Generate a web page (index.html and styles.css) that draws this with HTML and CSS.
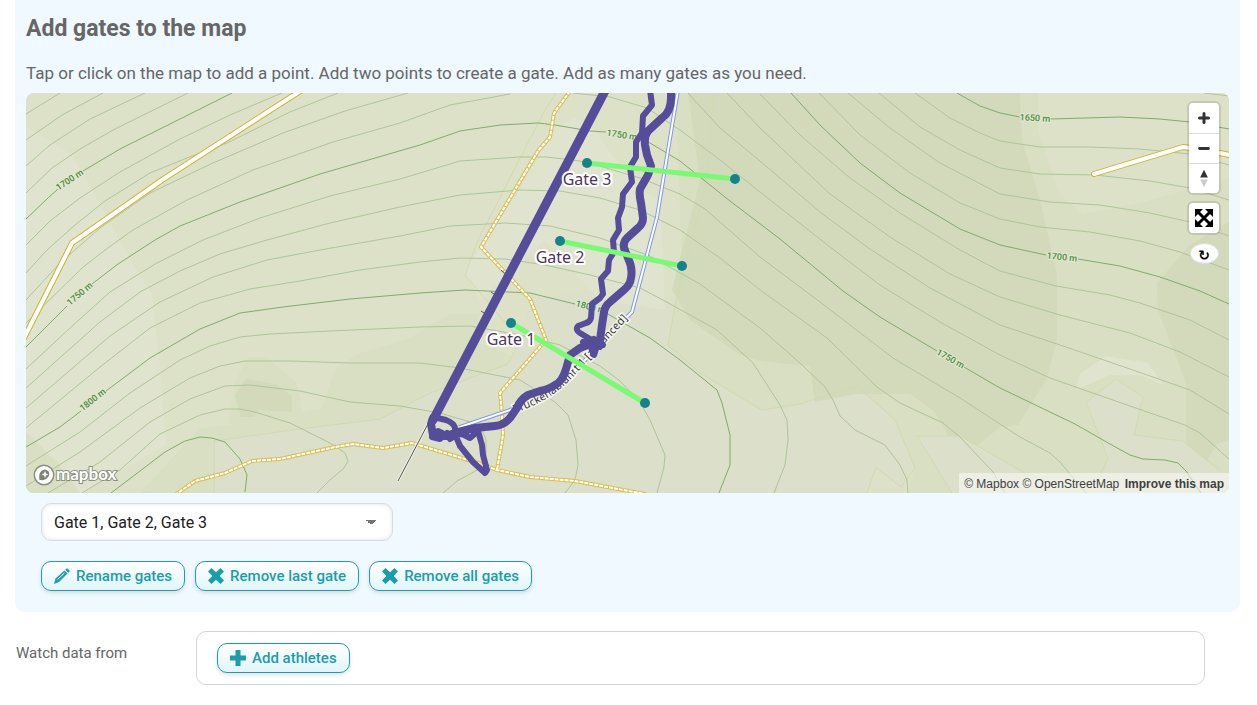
FILE: index.html
```html
<!DOCTYPE html>
<html lang="en">
<head>
    <meta charset="UTF-8">
    <meta name="viewport" content="width=device-width, initial-scale=1.0">
    <title>Add gates to the map</title>
    <link rel="stylesheet" href="styles.css">
</head>
<body>
    <section class="gates-panel">
        <h2>Add gates to the map</h2>
        <p class="hint">Tap or click on the map to add a point. Add two points to create a gate. Add as many gates as you need.</p>

        <div class="map">
            <svg class="map-canvas" viewBox="26 93 1203 400" preserveAspectRatio="xMidYMid slice" role="img" aria-label="Map with three gates">
                <!-- land cover -->
                <rect class="land" x="26" y="93" width="1203" height="400"/>
                <path class="land-light" d="M26 126L72 155L125 250L152 295L160 370L166 445L80 493H26z"/>
                <path class="land-mid" d="M26 432L60 465L80 493H26zM140 493L200 428L250 423L228 424L236 380L248 357H266L296 382L303 412L322 408L335 370L355 355L410 338L450 314H480L470 340L500 350L518 360L400 415L380 420L300 429L214 441L212 493z"/>
                <path class="land-dark" d="M235 395L246 379L275 384L292 396V412L258 410L254 417H241z"/>
                <path class="land-low" d="M212 441L300 429L380 420L430 390L507 365L518 345L530 300L600 290L676 300L670 345L700 373L762 410L800 404L857 386L895 420L915 468L901 487L876 467L867 493H212z"/>
                <path class="land-light" d="M556 128L575 118L595 130L612 155L640 190L660 200L665 310L600 300L545 240L480 300L464 271L520 190z"/>
                <path class="land-mid" d="M676 93H1229V493H908L915 468L895 420L857 386L800 404L762 410L700 373L668 345L682 270z"/>
                <path class="land-dark" d="M688 93H1020L1022 140L1040 200L1057 275V340L1046 380L1018 425L1000 427L975 447H955L935 412L910 394H855L815 402L810 366L760 361L740 355L690 320L672 290L700 180z"/>
                <path class="land" d="M1038 93H1229V178L1140 203L1083 214L1060 195L1038 130z"/>
                <path class="land-dark" d="M1229 222L1190 245L1157 283L1158 310L1186 383V450L1202 470L1216 444L1229 440z"/>
                <path class="land-low" d="M1086 402L1116 379L1143 397L1134 435L1183 441L1229 480V493H1100L1108 458zM917 436H960L1030 476L1070 493H952z"/>
                <path class="land-light" d="M1076 390L1080 374L1106 356L1148 363L1163 385L1140 375H1110z"/>
                <path class="boundary" d="M214 493V441L300 429L380 419L430 393L508 364L520 340L465 275L478 240L545 110L556 93M713 93L707 180L676 300L668 345L700 373L762 410L800 404L857 386L895 420L915 468L901 487L876 467L867 493M952 493L917 436H960L1030 476M1100 475L1108 458L1086 402L1116 379L1143 397L1134 435L1183 441L1220 470"/>

                <!-- minor contours, every 10 m -->
                <g class="contour">
                    <path d="M26 114L60 93M26 140L62 115L103 93M26 166L50 145L90 119L145 93M26 193L52 168L80 149L115 129L188 93"/>
                    <path d="M26 245L50 221L80 198L120 172L180 139L230 115L282 93"/>
                    <path d="M26 273L47 250L75 225L105 201L150 173L187 158L227 143L290 112L338 93"/>
                    <path d="M26 300L60 263L100 228L150 193L213 163L283 133L345 111L408 93"/>
                    <path d="M26 323L82 268L105 250L133 230L187 200L253 170L333 142L400 123L450 105L510 94M573 93L610 97L647 108L680 130L720 160L760 192L830 247L880 285L940 322L1000 355L1050 378L1130 406L1185 425L1200 433L1229 459"/>
                    <path d="M26 369L70 328L110 292L155 264L203 240L260 218L330 196L400 179L460 161L520 157L547 157L580 161L603 167L640 178L680 194L705 209L760 257L820 302L893 358L960 398L1020 437L1050 453L1060 462L1086 493"/>
                    <path d="M26 388L100 322L140 292L180 271L220 254L267 240L330 223L400 207L460 195L520 190L560 191L600 198L640 210L680 230L720 258L760 290L827 338L877 387L900 403L943 423L960 437L993 472L1005 493"/>
                    <path d="M26 408L110 336L160 302L213 277L267 260L320 250L377 240L400 236L450 226L505 223L550 226L600 238L650 256L700 284L760 328L800 363L825 387L833 400L840 416L855 430L885 445L900 465L907 480L908 493"/>
                    <path d="M26 428L100 367L150 328L200 303L250 289L300 281L360 270L420 262L460 258L505 259L545 265L590 275L640 288L663 300L717 330L753 363L780 405L787 420L788 440L785 465L774 493"/>
                    <path d="M26 466L80 432L130 393L180 360L210 346L240 337L270 334L330 331L420 327L470 326L520 335L560 345L600 366L620 381L640 402L650 420L665 455L664 467L657 493"/>
                    <path d="M26 486L80 452L140 408L190 378L220 366L245 361L290 361L350 363L420 363L460 368L520 380L555 402L568 415L576 440L578 465L575 480L565 493"/>
                    <path d="M48 493L100 462L150 422L190 399L225 386L250 385L300 391L350 402L400 406L440 413L480 425L486 440L486 455L483 467L457 481L443 493"/>
                    <path d="M82 493L120 470L160 434L200 415L225 409L240 409L255 412L290 423L330 443L345 453L348 461L344 468L330 480L317 493"/>
                    <path d="M688 93L720 128L760 161L820 212L870 249L930 288L1000 325L1060 345L1130 369L1190 390L1229 414"/>
                    <path d="M727 93L760 128L830 194L890 237L950 274L1000 297L1060 315L1130 333L1180 352L1229 377"/>
                    <path d="M760 94L800 135L850 178L900 213L960 250L1000 271L1056 286L1110 295L1140 303L1190 320L1229 340"/>
                    <path d="M819 93L860 135L910 173L960 203L1000 219L1040 227L1090 232L1140 241L1180 252L1229 270"/>
                    <path d="M848 93L890 128L940 163L1000 194L1050 202L1100 205L1150 213L1190 222L1229 236"/>
                    <path d="M879 93L920 127L960 150L1000 168L1040 174L1095 175L1150 181L1190 188L1229 200"/>
                    <path d="M915 93L950 118L980 133L1000 141L1040 147L1090 147L1140 149L1190 154L1229 165M1204 93L1229 96"/>
                </g>

                <!-- index contours, every 50 m -->
                <g class="contour contour-index">
                    <path d="M26 219L48 198L58 189M83 171L120 149L180 119L232 93"/>
                    <path d="M26 347L67 306M92 284L118 264L155 240L180 226L240 202L320 174L420 145L460 131L500 125L538 123L555 125L590 131L606 132M636 138L650 143L680 161L730 201L780 239L843 291L880 317L937 351M964 367L1000 388L1075 424L1110 444L1130 455L1143 459L1165 460L1178 463L1186 471L1201 493"/>
                    <path d="M26 447L60 427L81 411M106 391L150 358L200 329L240 313L283 307L350 299L420 293L465 290L530 293L575 304M606 313L650 338L680 360L717 390L722 403L730 435L730 465L719 493"/>
                    <path d="M111 493L140 471L165 452L185 441L200 437L212 438L225 442L240 459L247 475L245 492"/>
                    <path d="M791 93L820 125L860 163L900 193L960 229L1000 245L1046 255M1078 259L1120 266L1160 277L1200 291L1229 304"/>
                    <path d="M957 93L980 106L1000 113L1020 117M1050 119L1120 117L1160 119L1190 122L1229 129"/>
                </g>
                <g class="contour-label">
                    <text transform="translate(69 179) rotate(-34)" y="4">1700 m</text>
                    <text transform="translate(79 293) rotate(-41)" y="4">1750 m</text>
                    <text transform="translate(92 399) rotate(-38)" y="4">1800 m</text>
                    <text transform="translate(622 134) rotate(9)" y="4">1750 m</text>
                    <text transform="translate(591 306) rotate(14)" y="4">1800 m</text>
                    <text transform="translate(1035 117) rotate(3)" y="4">1650 m</text>
                    <text transform="translate(1062 256) rotate(6)" y="4">1700 m</text>
                    <text transform="translate(951 358) rotate(29)" y="4">1750 m</text>
                </g>

                <!-- roads -->
                <g class="road-case">
                    <path d="M20 346L72 243L162 180L280 104L302 90"/>
                    <path d="M1094 174L1183 147L1204 150L1235 156"/>
                </g>
                <g class="road">
                    <path d="M20 346L72 243L162 180L280 104L302 90"/>
                    <path d="M1094 174L1183 147L1204 150L1235 156"/>
                </g>
                <g class="track-case">
                    <path d="M570 91L554 113L550 137L538 151L481 247L530 299L546 340L500 393L502 415L503 435L497 470"/>
                    <path d="M175 495L195 481L225 473L252 461L280 459L335 447L353 444L383 448L412 443L475 462L497 470L530 477L575 481L645 494"/>
                </g>
                <g class="track">
                    <path d="M570 91L554 113L550 137L538 151L481 247L530 299L546 340L500 393L502 415L503 435L497 470"/>
                    <path d="M175 495L195 481L225 473L252 461L280 459L335 447L353 444L383 448L412 443L475 462L497 470L530 477L575 481L645 494"/>
                </g>

                <!-- ski run and lift -->
                <path class="run-case" d="M678 90L657 217L632 312L587 358L560 388L513 409L457 428"/>
                <path class="run" d="M678 90L657 217L632 312L587 358L560 388L513 409L457 428"/>
                <path class="lift-case" d="M398 481L430 420"/>
                <path class="lift" d="M398 481L430 420M501 270L508 276M491 292L497 296M481 311L487 315"/>
                <path id="run-line" d="M514 413Q550 402 574 376L656 289" fill="none"/>
                <text class="run-label"><textPath href="#run-line">Bruckenabfahrt 1 [advanced]</textPath></text>

                <!-- recorded tracks -->
                <g class="gps">
                    <path class="gps-wide" d="M606 89L502 288L433 420"/>
                    <path class="gps-mid" d="M671 90V98Q671 112 662 118L648 131Q644 136 645 145L647 155L651 166L648 175L640 189Q639 195 641 203L643 218Q643 224 638 228L627 238Q623 242 624 248L628 258Q633 268 631 278Q630 285 625 289L610 302Q605 306 604 312L602 325L600 340L580 348L570 355L566 369Q562 382 555 385Q549 389 540 391L528 395Q520 400 517 408L510 418Q504 425 495 426L475 428L458 432L446 436L433 435L431 424L433 418"/>
                    <path class="gps-thin" d="M650 90L652 105L643 116L642 133L636 142V157L630 167L632 182L623 194L622 207L618 218L619 230L613 240L614 252L609 260L608 271L601 279L603 294L600 298L592 304L591 318Q590 322 586 323L578 326Q575 330 580 333L590 339L600 347"/>
                    <path class="gps-thin" d="M583 342L596 349L594 355L587 338L603 345L594 339M433 417L446 420Q454 423 455 428V434L460 446L473 462L485 473L487 470L483 455L482 445L478 431L470 438L460 433L450 439L447 433L440 439L432 437L438 431L446 435L466 434"/>
                </g>

                <!-- gates -->
                <g class="gate">
                    <path d="M587 163L735 179M560 241L682 266M511 323L645 403"/>
                    <circle cx="587" cy="163" r="5"/><circle cx="735" cy="179" r="5"/>
                    <circle cx="560" cy="241" r="5"/><circle cx="682" cy="266" r="5"/>
                    <circle cx="511" cy="323" r="5"/><circle cx="645" cy="403" r="5"/>
                    <text x="587" y="185">Gate 3</text>
                    <text x="560" y="263">Gate 2</text>
                    <text x="511" y="345">Gate 1</text>
                </g>
            </svg>

            <div class="map-controls">
                <div class="control-group">
                    <button type="button" aria-label="Zoom in"><svg viewBox="0 0 30 30"><path d="M15 10.500V19.500M10.500 15H19.500" stroke="#333" stroke-width="3" stroke-linecap="round"/></svg></button>
                    <button type="button" aria-label="Zoom out"><svg viewBox="0 0 30 30"><path d="M10.500 15H19.500" stroke="#333" stroke-width="3" stroke-linecap="round"/></svg></button>
                    <button type="button" aria-label="Reset bearing to north"><svg viewBox="0 0 30 30"><path d="M11 14L15 6L19 14z" fill="#333"/><path d="M11 16H19L15 24z" fill="#ccc"/></svg></button>
                </div>
                <div class="control-group">
                    <button type="button" aria-label="Fit map"><svg viewBox="0 0 30 30"><path d="M9 9L21 21M21 9L9 21" stroke="#000" stroke-width="3"/><path d="M6 6H14L6 14zM24 6V14L16 6zM6 24V16L14 24zM24 24H16L24 16z"/></svg></button>
                </div>
                <button type="button" class="rotate" aria-label="Reload">&#8635;</button>
            </div>

            <a href="#" class="mapbox-logo" aria-label="Mapbox">
                <svg viewBox="0 0 88 23">
                    <circle cx="11" cy="11" r="9" fill="none" stroke="#8b8f80" stroke-width="3"/>
                    <circle cx="11" cy="11" r="9" fill="#fff"/>
                    <path d="M6.500 16C5.500 11 7 6 11.500 5.500C15.500 5.500 17.500 9.500 15.500 12.500C13.500 16 10 16.500 6.500 16z" fill="#7f8574"/>
                    <path d="M12 7L13 9.500L15.500 10.500L13 11.500L12 14L11 11.500L8.500 10.500L11 9.500z" fill="#fff"/>
                    <text x="23" y="16">mapbox</text>
                </svg>
            </a>
            <div class="attribution">
                <a href="#">© Mapbox</a> <a href="#">© OpenStreetMap</a> <a href="#" class="improve">Improve this map</a>
            </div>
        </div>

        <div class="gate-tools">
            <select class="gate-select" aria-label="Gates">
                <option>Gate 1, Gate 2, Gate 3</option>
            </select>
            <div class="button-row">
                <button type="button" class="btn">
                    <svg viewBox="0 0 16 16"><path d="M0 16L1.500 10.500L10.500 2.500L13.500 5.500L5 14z"/><path d="M11.300 1.700L12.500 .5Q13 0 13.500 .5L15.500 2.500Q16 3 15.500 3.500L14.300 4.700z"/><path d="M3.500 11.500L10.500 5" stroke="#f4fcfd" stroke-width="1"/></svg>
                    Rename gates
                </button>
                <button type="button" class="btn">
                    <svg viewBox="0 0 16 16"><path d="M3.500 0L8 4.300L12.500 0L16 3.500L11.700 8L16 12.500L12.500 16L8 11.700L3.500 16L0 12.500L4.300 8L0 3.500z"/></svg>
                    Remove last gate
                </button>
                <button type="button" class="btn">
                    <svg viewBox="0 0 16 16"><path d="M3.500 0L8 4.300L12.500 0L16 3.500L11.700 8L16 12.500L12.500 16L8 11.700L3.500 16L0 12.500L4.300 8L0 3.500z"/></svg>
                    Remove all gates
                </button>
            </div>
        </div>
    </section>

    <div class="form-row">
        <div class="form-label" id="watch-label">Watch data from</div>
        <div class="form-box" role="group" aria-labelledby="watch-label">
            <button type="button" class="btn">
                <svg viewBox="0 0 16 16"><path d="M5.500 0H10.500V5.500H16V10.500H10.500V16H5.500V10.500H0V5.500H5.500z"/></svg>
                Add athletes
            </button>
        </div>
    </div>
</body>
</html>
```
FILE: styles.css
```css
* {
    box-sizing: border-box;
}
body {
    margin: 0;
    background-color: #fff;
    color: #666;
    font-family: Roboto, "Open Sans", sans-serif;
    font-size: 15px;
}
.gates-panel {
    margin: 0 17px 0 15px;
    padding: 14px 11px 21px;
    background-color: #f0f9ff;
    border-radius: 0 0 10px 10px;
}
h2 {
    margin: 0;
    font-size: 23px;
    line-height: 30px;
    font-weight: bold;
}
.hint {
    margin: 17px 0 8px;
    font-size: 17px;
    line-height: 24px;
}

/* map */
.map {
    position: relative;
    height: 400px;
    border-radius: 8px;
    overflow: hidden;
}
.map-canvas {
    display: block;
    width: 100%;
    height: 100%;
}
.land { fill: #dde1c8; }
.land-light { fill: #e0e4ce; }
.land-mid { fill: #d9dfc2; }
.land-dark { fill: #d3d9bb; }
.land-low { fill: #dcdfc9; }
.boundary {
    fill: none;
    stroke: #d1dab0;
    stroke-width: 1;
}
.contour {
    fill: none;
    stroke: #aec598;
    stroke-width: 1;
    stroke-linejoin: round;
}
.contour-index {
    stroke: #83aa6c;
}
.contour-label text {
    font: 500 9px Roboto, sans-serif;
    fill: #4c8a3c;
    text-anchor: middle;
    stroke: #e3e8d3;
    stroke-width: 2px;
    paint-order: stroke;
}
.road-case,
.road,
.track-case,
.track {
    fill: none;
    stroke-linecap: round;
    stroke-linejoin: round;
}
.road-case { stroke: #d0b12a; stroke-width: 6; }
.road { stroke: #fff; stroke-width: 4; }
.track-case { stroke: #dabf4c; stroke-width: 4; }
.track {
    stroke: #fff;
    stroke-width: 2;
    stroke-linecap: butt;
    stroke-dasharray: 4 1;
}
.run-case { fill: none; stroke: #8396ee; stroke-width: 4; }
.run { fill: none; stroke: #fff; stroke-width: 2; }
.lift-case { fill: none; stroke: #eef0e4; stroke-width: 3; }
.lift { fill: none; stroke: #555; stroke-width: 1; }
.run-label {
    font: 11px "Noto Sans", sans-serif;
    fill: #333;
    stroke: #f4f5ee;
    stroke-width: 3px;
    paint-order: stroke;
}
.gps {
    fill: none;
    stroke: #554c9a;
    stroke-linecap: round;
    stroke-linejoin: round;
}
.gps-wide { stroke-width: 9; }
.gps-mid { stroke-width: 8; }
.gps-thin { stroke-width: 6; }
.gate path {
    stroke: #76fb72;
    stroke-width: 5;
}
.gate circle {
    fill: #16838c;
}
.gate text {
    font: 16px "Noto Sans", sans-serif;
    fill: #513459;
    text-anchor: middle;
    stroke: #fff;
    stroke-width: 4px;
    stroke-linejoin: round;
    paint-order: stroke;
}

/* controls lie over the map */
.map-controls {
    position: absolute;
    top: 10px;
    right: 10px;
    display: flex;
    flex-direction: column;
    align-items: center;
    gap: 10px;
}
.control-group {
    background-color: #fff;
    border-radius: 4px;
    box-shadow: 0 0 0 2px rgba(0, 0, 0, 0.1);
}
.control-group button {
    display: block;
    width: 30px;
    height: 30px;
    padding: 0;
    border: 0;
    background: none;
    cursor: pointer;
}
.control-group button + button {
    border-top: 1px solid #ddd;
}
.control-group svg {
    display: block;
    width: 100%;
    height: 100%;
}
.rotate {
    width: 29px;
    height: 21px;
    padding: 4px 0 0;
    border: 1px solid #ddd;
    border-radius: 50%;
    background-color: #fff;
    color: #000;
    font: bold 14px/15px "DejaVu Sans", sans-serif;
    cursor: pointer;
}
.mapbox-logo {
    position: absolute;
    left: 7px;
    bottom: 6px;
}
.mapbox-logo svg {
    display: block;
    width: 88px;
    height: 23px;
    overflow: visible;
}
.mapbox-logo text {
    font: bold 17px Lato, sans-serif;
    fill: #fff;
    stroke: #8b8f80;
    stroke-width: 2px;
    paint-order: stroke;
}
.attribution {
    position: absolute;
    right: 0;
    bottom: 0;
    padding: 2px 5px 0;
    background-color: rgba(255, 255, 255, 0.5);
    font: 12px/18px "Liberation Sans", Arial, sans-serif;
}
.attribution a {
    color: #404040;
    text-decoration: none;
}
.attribution .improve {
    margin-left: 2px;
    font-weight: bold;
}

/* tools under the map */
.gate-tools {
    padding: 10px 15px 0;
}
.gate-select {
    display: block;
    width: 352px;
    max-width: 100%;
    height: 38px;
    padding: 0 12px;
    border: 1px solid #d9dbdf;
    border-radius: 10px;
    appearance: none;
    background: linear-gradient(45deg, transparent 50%, #757575 50%) right 21px center / 5px 5px no-repeat,
        linear-gradient(135deg, #757575 50%, transparent 50%) right 16px center / 5px 5px no-repeat,
        #fff;
    box-shadow: inset 0 0 4px rgba(0, 0, 0, 0.12);
    color: #212121;
    font: 16px Roboto, sans-serif;
}
.button-row {
    display: flex;
    flex-wrap: wrap;
    gap: 10px;
    margin-top: 20px;
}
.btn {
    display: flex;
    align-items: center;
    gap: 6px;
    height: 30px;
    padding: 0 12px;
    border: 1px solid #1a9eab;
    border-radius: 10px;
    background: linear-gradient(#fff, #e0f6fa);
    box-shadow: 0 2px 4px rgba(0, 0, 0, 0.12);
    color: #1a9eab;
    font: 500 15px Roboto, "Open Sans", sans-serif;
    white-space: nowrap;
    cursor: pointer;
}
.btn svg {
    width: 16px;
    height: 16px;
    fill: currentColor;
}

/* watch data row */
.form-row {
    display: flex;
    margin: 19px 52px 0 16px;
}
.form-label {
    width: 180px;
    padding-top: 12px;
    line-height: 20px;
}
.form-box {
    flex: 1;
    padding: 11px 20px;
    border: 1px solid #d1d5df;
    border-radius: 10px;
}
```
